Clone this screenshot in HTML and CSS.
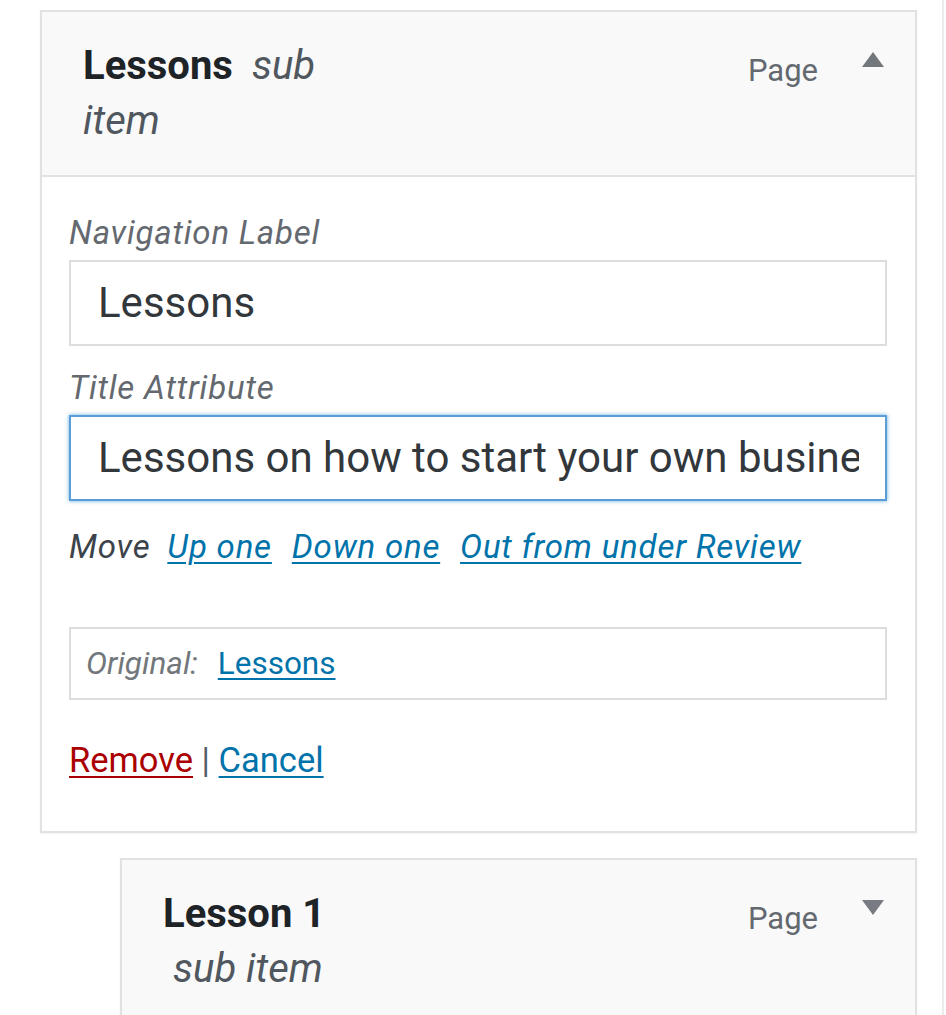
FILE: index.html
```html
<!DOCTYPE html>
<html lang="en">
<head>
<meta charset="utf-8">
<title>Menu item</title>
<link rel="stylesheet" href="styles.css">
</head>
<body>
<div class="screen">
  <div class="menu-item open">
    <div class="item-handle">
      <div class="item-title"><span class="menu-item-title">Lessons</span><span class="is-submenu">sub item</span></div>
      <div class="item-controls">
        <span class="item-type">Page</span>
        <svg class="toggle" width="22" height="15" viewBox="0 0 22 15"><polygon points="11,0 22,15 0,15" fill="#72777c"/></svg>
      </div>
    </div>
    <div class="item-settings">
      <div class="field first">
        <label class="field-label">Navigation Label</label>
        <div class="input">Lessons</div>
      </div>
      <div class="field">
        <label class="field-label">Title Attribute</label>
        <div class="input focus"><span class="input-text">Lessons on how to start your own business</span></div>
      </div>
      <div class="field-move"><span class="move-label">Move</span> <a href="#">Up one</a> <a href="#">Down one</a> <a href="#">Out from under Review</a></div>
      <div class="original"><span class="original-label">Original:</span> <a href="#">Lessons</a></div>
      <div class="actions"><a href="#" class="remove">Remove</a> <span class="sep">|</span> <a href="#" class="cancel">Cancel</a></div>
    </div>
  </div>
  <div class="menu-item sub">
    <div class="item-handle">
      <div class="item-title"><span class="menu-item-title">Lesson 1</span> <span class="is-submenu">sub item</span></div>
      <div class="item-controls">
        <span class="item-type">Page</span>
        <svg class="toggle" width="22" height="15" viewBox="0 0 22 15"><polygon points="0,0 22,0 11,15" fill="#787c82"/></svg>
      </div>
    </div>
  </div>
</div>
</body>
</html>
```
FILE: styles.css
```css
html, body {
  margin: 0;
  padding: 0;
  background: #fff;
}
body {
  font-family: Roboto, "Noto Sans", "Liberation Sans", sans-serif;
  overflow: hidden;
  height: 1015px;
}
.screen {
  box-sizing: border-box;
  width: 944px;
  min-height: 1015px;
  border-right: 2px solid #ececec;
  padding: 10px 25px 0 40px;
}
.menu-item {
  border: 2px solid #e2e2e2;
  background: #fff;
  box-shadow: 0 1px 2px rgba(0, 0, 0, 0.05);
}
.menu-item.sub {
  margin-top: 25px;
  margin-left: 80px;
}
.item-handle {
  display: flex;
  align-items: flex-start;
  background: #f9f9f9;
  padding: 26px 31px 27px 41px;
}
.open .item-handle {
  border-bottom: 2px solid #e2e2e2;
}
.item-title {
  flex: 1 1 auto;
  min-width: 0;
  margin-right: 389px;
  font-size: 40px;
  line-height: 55px;
}
.menu-item-title {
  font-weight: 700;
  color: #1d2327;
}
.is-submenu {
  font-style: italic;
  color: #50575e;
  margin-left: 10px;
}
.open .is-submenu {
  margin-left: 19px;
}
.item-controls {
  flex: 0 0 auto;
  display: flex;
  align-items: flex-start;
}
.item-type {
  font-size: 31px;
  line-height: 55px;
  padding-top: 5px;
  color: #646970;
}
.toggle {
  display: block;
  margin-left: 44px;
  margin-top: 14px;
}
.item-settings {
  padding: 36px 28px 50px 27px;
}
.field {
  margin-top: 22px;
}
.field.first {
  margin-top: 0;
}
.field-label {
  display: block;
  font-size: 33px;
  letter-spacing: 0.8px;
  line-height: 40px;
  font-style: italic;
  color: #646970;
  margin-bottom: 7px;
}
.input {
  box-sizing: border-box;
  height: 86px;
  border: 2px solid #dddddd;
  padding: 0 26px 0 27px;
  font-size: 42px;
  line-height: 82px;
  color: #32373c;
  white-space: nowrap;
  overflow: hidden;
}
.input.focus {
  border-color: #5b9dd9;
  box-shadow: 0 0 4px rgba(30, 140, 190, 0.7);
}
.input-text {
  display: block;
  overflow: hidden;
}
.field-move {
  margin-top: 26px;
  font-size: 33px;
  letter-spacing: 0.8px;
  line-height: 40px;
  font-style: italic;
  color: #3c434a;
}
.field-move a {
  color: #0073aa;
  text-decoration: underline;
  text-underline-offset: 4px;
  text-decoration-thickness: 2px;
  margin: 0 3px 0 8px;
}
.original {
  box-sizing: border-box;
  margin-top: 60px;
  height: 73px;
  border: 2px solid #dddddd;
  padding: 0 15px;
  font-size: 31.5px;
  line-height: 69px;
}
.original-label {
  font-style: italic;
  color: #72777c;
}
.original a {
  margin-left: 12px;
  color: #0073aa;
  text-decoration: underline;
  text-underline-offset: 4px;
  text-decoration-thickness: 2px;
}
.actions {
  margin-top: 39px;
  font-size: 34.5px;
  line-height: 42px;
  color: #555d66;
}
.actions a {
  text-decoration: underline;
  text-underline-offset: 4px;
  text-decoration-thickness: 2px;
}
.remove {
  color: #a00;
}
.cancel {
  color: #0073aa;
}
```
